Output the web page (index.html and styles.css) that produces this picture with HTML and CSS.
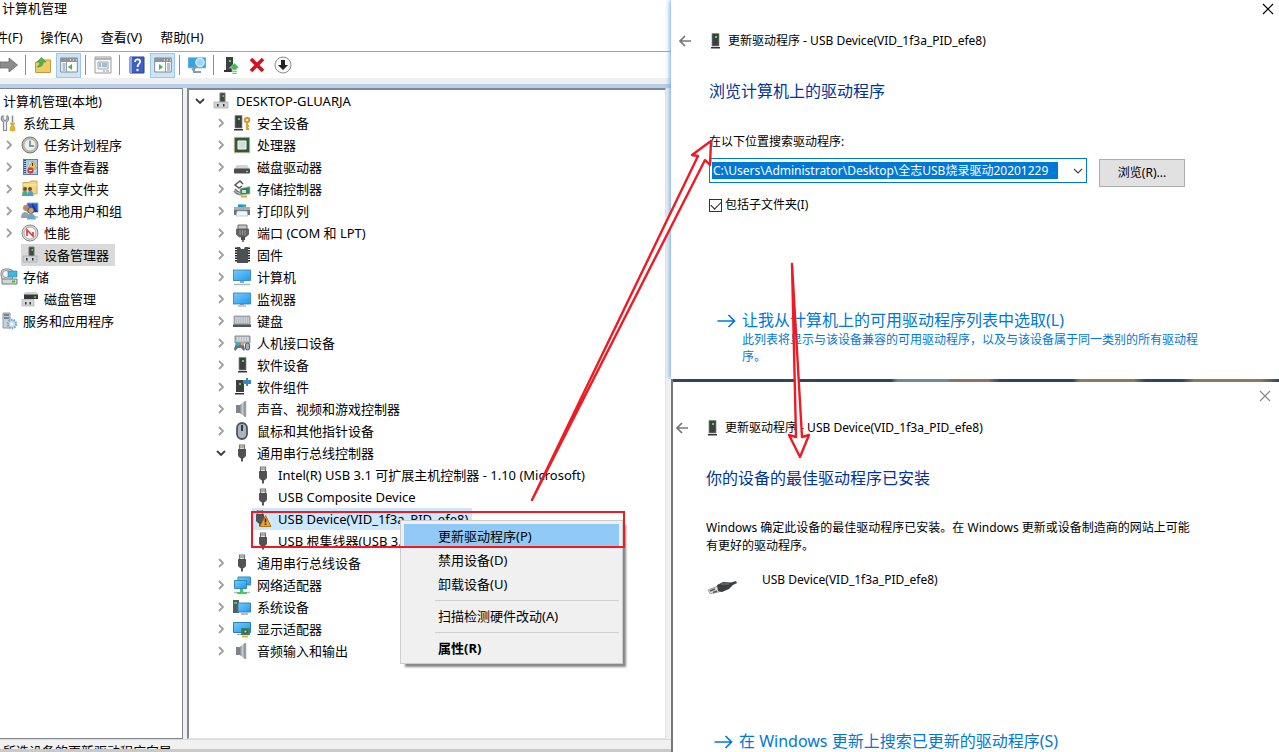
FILE: index.html
```html
<!DOCTYPE html>
<html lang="zh-CN">
<head>
<meta charset="utf-8">
<title>计算机管理</title>
<link rel="stylesheet" href="styles.css">
</head>
<body>
<svg class="sprite" aria-hidden="true">
  <defs>
    <linearGradient id="screen" x1="0" y1="0" x2="1" y2="1"><stop offset="0" stop-color="#7cc8fb"/><stop offset="1" stop-color="#1d9bf0"/></linearGradient>
    <linearGradient id="metal" x1="0" y1="0" x2="1" y2="0"><stop offset="0" stop-color="#68727a"/><stop offset=".6" stop-color="#c9cfd3"/><stop offset="1" stop-color="#7b858c"/></linearGradient>
  </defs>
  <symbol id="closed" viewBox="0 0 18 18"><path d="M7 5l4 4-4 4" fill="none" stroke="#a0a0a0" stroke-width="1.8"/></symbol>
  <symbol id="open" viewBox="0 0 18 18"><path d="M5 7l4 4 4-4" fill="none" stroke="#404040" stroke-width="1.9"/></symbol>
  <symbol id="tools" viewBox="0 0 18 18"><path d="M3 1.500v4l2 1.500 2-1.500v-4M3 1.500C0 3 1 7 3.500 8v8.500h3V8C9 7 9.500 3 7 1.500" fill="#f2f2f2" stroke="#858b90" stroke-width="1.200"/><path d="M12.500 1.500v7" stroke="#8a9298" stroke-width="1.600"/><path d="M10.500 9h4l-.8 2 1.300 4.500c0 2-5 2-5 0l1.300-4.500z" fill="#f1b21c" stroke="#c58a10" stroke-width=".6"/></symbol>
  <symbol id="clock" viewBox="0 0 18 18"><circle cx="9" cy="9" r="8" fill="#b9bdc0" stroke="#777" stroke-width="1"/><circle cx="9" cy="9" r="6" fill="#f4efd8" stroke="#8f99a1" stroke-width=".6"/><path d="M9 4.500V10h4" fill="none" stroke="#4784b5" stroke-width="1.500"/></symbol>
  <symbol id="events" viewBox="0 0 18 18"><rect x="2.500" y="1.500" width="14" height="15" fill="#a9c8e8" stroke="#597ea9"/><path d="M4 2v14" stroke="#35506f" stroke-width="2" stroke-dasharray="1 1"/><path d="M8 5h2M7 8h2M13 13h2" stroke="#e9f3fb"/><path d="M11.500 3l4 7h-8z" fill="#f7cf30" stroke="#bd920d" stroke-width=".6"/><path d="M11.500 5v3" stroke="#333"/><circle cx="9.500" cy="12.500" r="3" fill="#d8343a"/><path d="M8 12.500h3" stroke="#fff" stroke-width="1.200"/></symbol>
  <symbol id="share" viewBox="0 0 18 18"><path d="M2 4V2.500h6L9.500 1H16v13H2z" fill="#f1d580" stroke="#cfa94e"/><path d="M2 5h14" stroke="#fff0ac"/><circle cx="4" cy="9" r="2" fill="#6d5037"/><circle cx="9" cy="9" r="2" fill="#6d5037"/><path d="M1 16c0-7 6-7 6 0z" fill="#3bb48b"/><path d="M6.500 16c0-7 6-7 6 0z" fill="#4f9ed2"/></symbol>
  <symbol id="users" viewBox="0 0 18 18"><path d="M6 1h11v9H6z" fill="#2858d8" stroke="#9aa7b3"/><path d="M11 1v9h6z" fill="#163bac"/><path d="M9 14h8v2H9z" fill="#c3c8cc"/><circle cx="5" cy="6" r="3" fill="#b78b5e"/><circle cx="10" cy="8.500" r="3" fill="#cfaa78" stroke="#5d4330" stroke-width=".8"/><path d="M0 16c0-8 8-8 9 0z" fill="#8fa3b3"/><path d="M6 17.500c0-8 8-8 9 0z" fill="#6aa6cf"/></symbol>
  <symbol id="perf" viewBox="0 0 18 18"><circle cx="9" cy="9" r="8" fill="#ddd" stroke="#888"/><circle cx="9" cy="9" r="6" fill="#fff" stroke="#8a8a8a" stroke-width=".7"/><path d="M6 12V6l6 6V8" fill="none" stroke="#e23b3b" stroke-width="1.700"/></symbol>
  <symbol id="devmgr" viewBox="0 0 18 18"><path d="M8 1h5v9H8z" fill="#444" stroke="#747474"/><path d="M10.500 3H12v2h-1.500z" fill="#35df4d"/><path d="M2 10h14v6H2z" fill="#d2d4d6" stroke="#a5a8ab" stroke-width=".7"/><path d="M5 12h1.500v2.500H5zM11 12h1.500v2.500H11z" fill="#333"/></symbol>
  <symbol id="storage" viewBox="0 0 18 18"><rect x="1" y="1" width="12" height="11" rx="4" fill="#d7d9da" stroke="#858b8f"/><circle cx="6" cy="6" r="3.500" fill="#f6f6f6" stroke="#999"/><path d="M8 3h9v6H8z" fill="#45b4df" stroke="#3184a7" stroke-width=".6"/><path d="M2 11h15v5H2z" fill="#d3d5d6" stroke="#777b7e"/><path d="M12 13.500h3" stroke="#1fc43c" stroke-width="1.800"/></symbol>
  <symbol id="diskmgr" viewBox="0 0 18 18"><path d="M4 2h12l1 3H2z" fill="#d3d4d5"/><path d="M3 4.500h14V9H3z" fill="#353739"/><path d="M13 7h2" stroke="#45e151" stroke-width="1.500"/><path d="M1 9.500h12V16H1z" fill="#d6d8d9" stroke="#a0a3a6" stroke-width=".6"/><path d="M4 12h1.500v2.500H4zM8.500 12H10v2.500H8.500z" fill="#333"/></symbol>
  <symbol id="services" viewBox="0 0 18 18"><path d="M3 1h7v15H3z" fill="#c9d0d5" stroke="#8e989f"/><path d="M4 3h5M4 6h5" stroke="#536b7c" stroke-width="1.400"/><circle cx="12" cy="12" r="4.200" fill="#c3daea" stroke="#7ba3c1" stroke-width="2" stroke-dasharray="1.600 1"/><circle cx="12" cy="12" r="1.600" fill="#fff"/></symbol>
  <symbol id="tower" viewBox="0 0 18 18"><path d="M6 1.500h7V14H6z" fill="#3d3f40" stroke="#808486" stroke-width=".7"/><path d="M9 4h2v2H9z" fill="#35ed47"/><path d="M5 15h9v1.500H5z" fill="#333"/></symbol>
  <symbol id="security" viewBox="0 0 18 18"><path d="M2 1.500h7V14H2z" fill="#3d3f40" stroke="#808486" stroke-width=".7"/><path d="M5 4h2v2H5z" fill="#35ed47"/><path d="M1 15h9v1.500H1z" fill="#333"/><circle cx="14" cy="6" r="2.200" fill="#fff" stroke="#d59d2e" stroke-width="2.200"/><path d="M14 9v7M14 12h2M14 15h2" stroke="#d59d2e" stroke-width="1.800"/></symbol>
  <symbol id="cpu" viewBox="0 0 18 18"><rect x="1.500" y="1.500" width="15" height="15" fill="#3e6950" stroke="#b29d52" stroke-width="1.500" stroke-dasharray="1 1"/><rect x="3" y="3" width="12" height="12" fill="none" stroke="#295c43" stroke-width="2"/><path d="M5 5h8v8H5z" fill="#d9dbd6" stroke="#f3f3ef"/></symbol>
  <symbol id="drive" viewBox="0 0 18 18"><path d="M4 7h10l3 4H1z" fill="#d1d4d6"/><rect x="1" y="10.500" width="16" height="5" rx="1" fill="#4a4d4f"/><path d="M13 13.500h2" stroke="#4be35b" stroke-width="1.500"/></symbol>
  <symbol id="controller" viewBox="0 0 18 18"><path d="M10 4L7 1 2 5l4 3 3-2" fill="none" stroke="#555" stroke-width="1.500"/><path d="M2 9c2 3 4 3 6 4M1 11c2 3 4 3 7 4" stroke="#777" fill="none" stroke-width="1.500"/><path d="M7 8.500l10-2V14l-10 1z" fill="#34835e" stroke="#b9c8c0" stroke-width=".7"/><path d="M9 10h4v3H9z" fill="#d5dad7"/><path d="M8 16.500h6" stroke="#e8a322" stroke-width="2"/></symbol>
  <symbol id="printer" viewBox="0 0 18 18"><path d="M5 2h8v4H5z" fill="#d5e9f6"/><path d="M5 4h5" stroke="#1995d5" stroke-width="3"/><path d="M10 4h3" stroke="#3bb95c" stroke-width="3"/><path d="M1 6h16v7H1z" fill="#6a7176"/><path d="M1 5h16v3H1z" fill="#a7adb1"/><path d="M4 9h10l1 5H3z" fill="#f3f5f6" stroke="#a8aeb2" stroke-width=".6"/></symbol>
  <symbol id="port" viewBox="0 0 18 18"><path d="M5 1h9v5H5z" fill="#c2c4c5" stroke="#696b6c"/><path d="M3.500 5h12v5.500l-3 2.500h-6l-3-2.500z" fill="#626466" stroke="#454749" stroke-width=".7"/><path d="M7 6v5M9.500 6v5M12 6v5" stroke="#999"/><path d="M8 13h4v3H8z" fill="#4a4c4e"/><path d="M10 16v2" stroke="#4a4c4e" stroke-width="1.500"/></symbol>
  <symbol id="firmware" viewBox="0 0 18 18"><path d="M4 1h3l1 2h3l1-2h3v16H4z" fill="#4c5052"/><path d="M3 1.500v15M16 1.500v15" stroke="#222" stroke-width="2" stroke-dasharray="1.500 1"/></symbol>
  <symbol id="computer" viewBox="0 0 18 18"><rect x=".5" y="2" width="17" height="10.500" fill="url(#screen)" stroke="#2680b8" stroke-width=".8"/><path d="M7 13h4v2H7z" fill="#9ba6ae"/><path d="M1 16.500h16" stroke="#a3b8c8" stroke-width="1.500"/></symbol>
  <symbol id="monitor" viewBox="0 0 18 18"><rect x=".5" y="3" width="17" height="11" fill="url(#screen)" stroke="#2680b8" stroke-width=".8"/><path d="M7 14.500h4M5 16h8" stroke="#87939b"/></symbol>
  <symbol id="keyboard" viewBox="0 0 18 18"><path d="M1 4h16v10H1z" fill="#a9b0b4" stroke="#858d92" stroke-width=".7"/><path d="M2 6h14M2 8h14M2 10h14" stroke="#eee" stroke-dasharray="1.500 .6"/><path d="M0 12.500h18V15H0z" fill="#4d565c"/></symbol>
  <symbol id="hid" viewBox="0 0 18 18"><path d="M2 2h15v7H2z" fill="#b8bec1" stroke="#858d92"/><path d="M4 4h12M4 6h12" stroke="#f5f5f5" stroke-dasharray="1.500 1"/><path d="M1 15l2-6h7l2 6-1 2-3-3H5l-3 3z" fill="#62737f"/><circle cx="5" cy="10" r="2" fill="#3ba8dc"/><circle cx="9" cy="10" r="1.500" fill="#e4a04a"/><rect x="12.500" y="9" width="4" height="7" rx="2" fill="#a6afb4" stroke="#4f5a61"/></symbol>
  <symbol id="component" viewBox="0 0 18 18"><path d="M3 2h8v12H3z" fill="#3d3f40"/><path d="M6 5h2v2H6z" fill="#35ed47"/><path d="M2 15h9v1.500H2z" fill="#333"/><path d="M10 2h3V0h2v2h3v4h-3v2h-2V6h-3z" fill="#3787c5"/></symbol>
  <symbol id="speaker" viewBox="0 0 18 18"><path d="M3 5h3v8H3z" fill="#7b858b"/><path d="M6 5.500L12 1v16l-6-4.500z" fill="url(#metal)"/><path d="M12.500 1v16" stroke="#9aa2a8" stroke-width="1.500"/></symbol>
  <symbol id="mouse" viewBox="0 0 18 18"><rect x="4" y="1" width="10" height="16" rx="5" fill="#a9b4bd" stroke="#4c555d" stroke-width="1.800"/><path d="M9 3v6" stroke="#323b42" stroke-width="2"/></symbol>
  <symbol id="usb" viewBox="0 0 18 18"><path d="M6.500 1h5v5h-5z" fill="#e5e5e5" stroke="#777" stroke-width="1.200"/><path d="M8 2v2M10 2v2" stroke="#777"/><path d="M5.500 5.500h7V12l-2 2h-3l-2-2z" fill="#505254" stroke="#3c3d3f" stroke-width=".8"/><path d="M9 14v3.500" stroke="#555" stroke-width="2"/></symbol>
  <symbol id="usbwarn" viewBox="0 0 18 18"><use href="#usb" x="-3" y="-1" width="18" height="18"/><path d="M11.500 5.500l5.500 11H6z" fill="#f2a71d" stroke="#af7310"/><path d="M11.500 8.500v4M11.500 13.500v1.500" stroke="#222" stroke-width="1.600"/></symbol>
  <symbol id="network" viewBox="0 0 18 18"><path d="M5 1h12.500v8H5z" fill="url(#screen)" stroke="#3389bb"/><path d="M1.500 4.500h12v8h-12z" fill="url(#screen)" stroke="#3389bb"/><path d="M7 13h3v3h4v2H4v-2h3z" fill="#48c95e"/><path d="M1 16.500h3M14 16.500h3" stroke="#b5bcc0" stroke-width="1.500"/></symbol>
  <symbol id="system" viewBox="0 0 18 18"><path d="M0 2h6v13H0z" fill="#555d61"/><path d="M1 5h3" stroke="#57db6b" stroke-width="1.500"/><path d="M5 5h12.500v9H5z" fill="url(#screen)" stroke="#2e83b3"/><path d="M8 16h7" stroke="#9baab5" stroke-width="1.500"/></symbol>
  <symbol id="display" viewBox="0 0 18 18"><path d="M.5 2.500h17v10H.5z" fill="url(#screen)" stroke="#2680b8"/><path d="M4 14.500h4" stroke="#99a5ad"/><path d="M8 8h9v7H8z" fill="#36885a"/><path d="M11 10h3v3h-3z" fill="#c6d7cc" stroke="#444"/><path d="M9 16.500h6" stroke="#e6b33c" stroke-width="2"/></symbol>
  <symbol id="forward" viewBox="0 0 18 18"><path d="M0 6h9V2l8.500 7L9 16v-4H0z" fill="#8d8d8d" stroke="#686868" stroke-width=".8"/></symbol>
  <symbol id="folderup" viewBox="0 0 18 18"><path d="M1.500 6h5L9 4h7.500v12.500h-15z" fill="#f0cb6b" stroke="#c69b37"/><path d="M3 11c2-1 3-3 3-5H3l4.500-4.500L12 6H9c0 4-2 5-6 5z" fill="#4bb84a" stroke="#318e34" stroke-width=".6"/></symbol>
  <symbol id="treepane" viewBox="0 0 18 18"><path d="M.7 2h16.600v14H.7z" fill="#fff" stroke="#83898e"/><path d="M1 2h16v4H1z" fill="#8e9499"/><path d="M10 4h1M13 4h1M16 4h1" stroke="#fff"/><path d="M6.500 6v10" stroke="#999"/><path d="M2.500 8h3M2.500 10h3M2.500 12h3M2.500 14h3" stroke="#5389b6"/><path d="M12 8v6l-4-3z" fill="#43b649"/></symbol>
  <symbol id="actionpane" viewBox="0 0 18 18"><path d="M.7 2h16.600v14H.7z" fill="#fff" stroke="#83898e"/><path d="M1 2h16v4H1z" fill="#8e9499"/><path d="M10 4h1M13 4h1M16 4h1" stroke="#fff"/><path d="M11.500 6v10" stroke="#999"/><path d="M13 8h3M13 10h3M13 12h3M13 14h3" stroke="#5389b6"/><path d="M5 8v6l4-3z" fill="#43b649"/></symbol>
  <symbol id="props" viewBox="0 0 18 18"><path d="M1 1h16v16H1z" fill="#f8f8f8" stroke="#9b9b9b"/><path d="M1 3h16" stroke="#b4b4b4" stroke-width="2"/><path d="M4 6h10v7H4z" fill="#e1eaf0" stroke="#a4b0b8"/><path d="M5 8h2M8 8h5M5 10h2M8 10h5" stroke="#698bab"/><path d="M9 15h2M12 15h3" stroke="#999"/></symbol>
  <symbol id="help" viewBox="0 0 18 18"><path d="M2 1h14v16H2z" fill="#405fc2" stroke="#263e98"/><path d="M3 1v16" stroke="#94a5e5" stroke-width="2"/><path d="M7 6c0-4 6-3 5 0-.5 2-2.500 2-2.500 5" fill="none" stroke="#fff" stroke-width="1.800"/><circle cx="9.500" cy="14" r="1.200" fill="#fff"/></symbol>
  <symbol id="scan" viewBox="0 0 18 18"><path d="M0 1.500h18V12H0z" fill="#36a4df" stroke="#9cc3d6" stroke-width=".7"/><path d="M6 13v3h7" fill="none" stroke="#869ca9" stroke-width="2"/><circle cx="12" cy="6.500" r="4.200" fill="#9bd9fa" stroke="#dceaf0" stroke-width="1.300"/><path d="M9 10l-5 4" stroke="#8098a7" stroke-width="2"/></symbol>
  <symbol id="update" viewBox="0 0 18 18"><path d="M4 1h7v13H4z" fill="#3d3f40"/><path d="M7 4h2v2H7z" fill="#35ed47"/><path d="M2 14h9v2H2z" fill="#333"/><path d="M12.500 7l5 5H15v2h-5v-2H7.500zM10 14.500h5V16h-5zM10 16.500h5V18h-5z" fill="#3dbd4a" stroke="#fff" stroke-width=".5"/></symbol>
  <symbol id="remove" viewBox="0 0 18 18"><path d="M3 3l12 12M15 3L3 15" stroke="#d60f1e" stroke-width="3.600"/></symbol>
  <symbol id="down" viewBox="0 0 18 18"><circle cx="9" cy="9" r="8" fill="#f8f8f8" stroke="#8c8c8c"/><path d="M7 4h4v5h3l-5 5-5-5h3z" fill="#222"/></symbol>
  <symbol id="back" viewBox="0 0 18 18"><path d="M15 9H4M9 4L4 9l5 5" fill="none" stroke="#757575" stroke-width="1.700"/></symbol>
  <symbol id="go" viewBox="0 0 20 18"><path d="M1 9h17M12 3l6 6-6 6" fill="none" stroke="#0078d7" stroke-width="1.700"/></symbol>
  <symbol id="close" viewBox="0 0 18 18"><path d="M4 4l10 10M14 4L4 14" fill="none" stroke="currentColor" stroke-width="1.200"/></symbol>
</svg>

<div class="desktop">
  <section class="manager">
    <header class="titlebar">计算机管理</header>
    <nav class="menubar">
      <button>文件(F)</button><button>操作(A)</button><button>查看(V)</button><button>帮助(H)</button>
    </nav>
    <div class="toolbar">
      <button aria-label="前进"><svg><use href="#forward"/></svg></button><i></i>
      <button aria-label="向上"><svg><use href="#folderup"/></svg></button>
      <button class="on" aria-label="控制台树"><svg><use href="#treepane"/></svg></button><i></i>
      <button aria-label="属性"><svg><use href="#props"/></svg></button><i></i>
      <button aria-label="帮助"><svg><use href="#help"/></svg></button>
      <button class="on" aria-label="操作窗格"><svg><use href="#actionpane"/></svg></button><i></i>
      <button aria-label="扫描"><svg><use href="#scan"/></svg></button><i></i>
      <button aria-label="更新"><svg><use href="#update"/></svg></button>
      <button aria-label="卸载"><svg><use href="#remove"/></svg></button>
      <button aria-label="禁用"><svg><use href="#down"/></svg></button>
    </div>
    <div class="panes">
      <ul class="tree console">
        <li class="root"><span class="label">计算机管理(本地)</span></li>
        <li><span class="label"><svg><use href="#tools"/></svg>系统工具</span></li>
        <li><svg class="chev"><use href="#closed"/></svg><span class="label"><svg><use href="#clock"/></svg>任务计划程序</span></li>
        <li><svg class="chev"><use href="#closed"/></svg><span class="label"><svg><use href="#events"/></svg>事件查看器</span></li>
        <li><svg class="chev"><use href="#closed"/></svg><span class="label"><svg><use href="#share"/></svg>共享文件夹</span></li>
        <li><svg class="chev"><use href="#closed"/></svg><span class="label"><svg><use href="#users"/></svg>本地用户和组</span></li>
        <li><svg class="chev"><use href="#closed"/></svg><span class="label"><svg><use href="#perf"/></svg>性能</span></li>
        <li><span class="chev"></span><span class="label current"><svg><use href="#devmgr"/></svg>设备管理器</span></li>
        <li><span class="label"><svg><use href="#storage"/></svg>存储</span></li>
        <li><span class="chev"></span><span class="label"><svg><use href="#diskmgr"/></svg>磁盘管理</span></li>
        <li><span class="label"><svg><use href="#services"/></svg>服务和应用程序</span></li>
      </ul>
      <ul class="tree devices">
        <li class="root"><svg class="chev"><use href="#open"/></svg><span class="label"><svg><use href="#devmgr"/></svg>DESKTOP-GLUARJA</span></li>
        <li><svg class="chev"><use href="#closed"/></svg><span class="label"><svg><use href="#security"/></svg>安全设备</span></li>
        <li><svg class="chev"><use href="#closed"/></svg><span class="label"><svg><use href="#cpu"/></svg>处理器</span></li>
        <li><svg class="chev"><use href="#closed"/></svg><span class="label"><svg><use href="#drive"/></svg>磁盘驱动器</span></li>
        <li><svg class="chev"><use href="#closed"/></svg><span class="label"><svg><use href="#controller"/></svg>存储控制器</span></li>
        <li><svg class="chev"><use href="#closed"/></svg><span class="label"><svg><use href="#printer"/></svg>打印队列</span></li>
        <li><svg class="chev"><use href="#closed"/></svg><span class="label"><svg><use href="#port"/></svg>端口 (COM 和 LPT)</span></li>
        <li><svg class="chev"><use href="#closed"/></svg><span class="label"><svg><use href="#firmware"/></svg>固件</span></li>
        <li><svg class="chev"><use href="#closed"/></svg><span class="label"><svg><use href="#computer"/></svg>计算机</span></li>
        <li><svg class="chev"><use href="#closed"/></svg><span class="label"><svg><use href="#monitor"/></svg>监视器</span></li>
        <li><svg class="chev"><use href="#closed"/></svg><span class="label"><svg><use href="#keyboard"/></svg>键盘</span></li>
        <li><svg class="chev"><use href="#closed"/></svg><span class="label"><svg><use href="#hid"/></svg>人机接口设备</span></li>
        <li><svg class="chev"><use href="#closed"/></svg><span class="label"><svg><use href="#tower"/></svg>软件设备</span></li>
        <li><svg class="chev"><use href="#closed"/></svg><span class="label"><svg><use href="#component"/></svg>软件组件</span></li>
        <li><svg class="chev"><use href="#closed"/></svg><span class="label"><svg><use href="#speaker"/></svg>声音、视频和游戏控制器</span></li>
        <li><svg class="chev"><use href="#closed"/></svg><span class="label"><svg><use href="#mouse"/></svg>鼠标和其他指针设备</span></li>
        <li><svg class="chev"><use href="#open"/></svg><span class="label"><svg><use href="#usb"/></svg>通用串行总线控制器</span></li>
        <li class="leaf"><span class="label"><svg><use href="#usb"/></svg>Intel(R) USB 3.1 可扩展主机控制器 - 1.10 (Microsoft)</span></li>
        <li class="leaf"><span class="label"><svg><use href="#usb"/></svg>USB Composite Device</span></li>
        <li class="leaf target"><span class="label selected"><svg><use href="#usbwarn"/></svg>USB Device(VID_1f3a_PID_efe8)</span>
          <div class="popup">
            <button class="hot">更新驱动程序(P)</button>
            <button>禁用设备(D)</button>
            <button>卸载设备(U)</button>
            <hr>
            <button>扫描检测硬件改动(A)</button>
            <hr>
            <button class="strong">属性(R)</button>
          </div>
          <div class="marker"></div>
        </li>
        <li class="leaf"><span class="label"><svg><use href="#usb"/></svg>USB 根集线器(USB 3.0)</span></li>
        <li><svg class="chev"><use href="#closed"/></svg><span class="label"><svg><use href="#usb"/></svg>通用串行总线设备</span></li>
        <li><svg class="chev"><use href="#closed"/></svg><span class="label"><svg><use href="#network"/></svg>网络适配器</span></li>
        <li><svg class="chev"><use href="#closed"/></svg><span class="label"><svg><use href="#system"/></svg>系统设备</span></li>
        <li><svg class="chev"><use href="#closed"/></svg><span class="label"><svg><use href="#display"/></svg>显示适配器</span></li>
        <li><svg class="chev"><use href="#closed"/></svg><span class="label"><svg><use href="#speaker"/></svg>音频输入和输出</span></li>
      </ul>
    </div>
    <footer class="status"><span>所选设备的更新驱动程序向导</span></footer>
  </section>

  <div class="wizards">
    <section class="wizard browse">
      <div class="closebar"><button aria-label="关闭"><svg><use href="#close"/></svg></button></div>
      <header><button aria-label="返回"><svg><use href="#back"/></svg></button><svg><use href="#tower"/></svg><span>更新驱动程序 - USB Device(VID_1f3a_PID_efe8)</span></header>
      <div class="body">
        <h1>浏览计算机上的驱动程序</h1>
        <label class="caption" for="path">在以下位置搜索驱动程序:</label>
        <div class="picker">
          <div class="combo"><input id="path" type="text" value="C:\Users\Administrator\Desktop\全志USB烧录驱动20201229"><button aria-label="展开"><svg viewBox="0 0 12 12"><path d="M2 4l4 4 4-4" fill="none" stroke="#444" stroke-width="1.200"/></svg></button></div>
          <button class="push">浏览(R)...</button>
        </div>
        <div class="check"><input id="sub" type="checkbox" checked><label for="sub">包括子文件夹(I)</label></div>
        <a class="command" href="#"><svg><use href="#go"/></svg><span><b>让我从计算机上的可用驱动程序列表中选取(L)</b><small>此列表将显示与该设备兼容的可用驱动程序，以及与该设备属于同一类别的所有驱动程序。</small></span></a>
      </div>
    </section>
    <section class="wizard done">
      <div class="closebar"><button aria-label="关闭"><svg><use href="#close"/></svg></button></div>
      <header><button aria-label="返回"><svg><use href="#back"/></svg></button><svg><use href="#tower"/></svg><span>更新驱动程序 - USB Device(VID_1f3a_PID_efe8)</span></header>
      <div class="body">
        <h1>你的设备的最佳驱动程序已安装</h1>
        <p>Windows 确定此设备的最佳驱动程序已安装。在 Windows 更新或设备制造商的网站上可能有更好的驱动程序。</p>
        <div class="device">
          <svg viewBox="0 0 32 20"><path d="M2 13l10-4 4 5-8 2-4 .5z" fill="#e2e4e5" stroke="#888" stroke-width=".8"/><path d="M4 14l5-2M7 15.500l4-1.500" stroke="#555" stroke-width="1.400"/><path d="M11 8l6-3 8 .5 5-1.500 1 2-4 2-4 4-7 3-4-1z" fill="#3d3f41"/><path d="M15 7l8 0" stroke="#777" stroke-width="1.200"/></svg>
          <span>USB Device(VID_1f3a_PID_efe8)</span>
        </div>
        <a class="command" href="#"><svg><use href="#go"/></svg><span><b>在 Windows 更新上搜索已更新的驱动程序(S)</b></span></a>
      </div>
    </section>
  </div>

  <svg class="arrows" viewBox="0 0 1279 752" preserveAspectRatio="none" aria-hidden="true">
    <g fill="#fff" stroke="#ed1c24" stroke-width="2.400" stroke-linejoin="round">
      <path d="M532 500L698 156l-6-1 19-14-1 24-5-5z"/>
      <path d="M792 264l4 173-7-2 11 22 9-22-7 2z"/>
    </g>
  </svg>
</div>
</body>
</html>
```
FILE: styles.css
```css
* { box-sizing: border-box; }
body {
  margin: 0;
  background: #f0f0f0;
  color: #000;
  font: 13px/22px "Noto Sans", "Noto Sans CJK SC", sans-serif;
}
button {
  border: 0;
  padding: 0;
  background: none;
  color: inherit;
  font: inherit;
}
svg { flex: none; width: 18px; height: 18px; }
.sprite { position: absolute; width: 0; height: 0; }

.desktop {
  position: relative;
  display: grid;
  grid-template-columns: minmax(0, 671fr) minmax(0, 608fr);
  min-height: 100vh;
  overflow: hidden;
}

/* Computer management window */
.manager {
  display: flex;
  flex-direction: column;
  min-width: 0;
  background: #fff;
}
.titlebar { padding: 0 2px; height: 26px; line-height: 16px; }
.menubar {
  display: flex;
  align-items: flex-start;
  gap: 18px;
  height: 26px;
  margin-left: -18px;
  border-bottom: 1px solid #a5a8ab;
}
.toolbar {
  display: flex;
  align-items: center;
  gap: 1px;
  height: 32px;
  border-bottom: 6px solid #f0f0f0;
}
.toolbar button {
  display: grid;
  place-items: center;
  width: 25px;
  height: 25px;
}
.toolbar button:first-child { width: 21px; justify-content: start; }
.toolbar .on { background: #cce4f7; border: 1px solid #99c9ef; }
.toolbar i { width: 1px; height: 20px; margin: 0 3px; background: #8c8c8c; }
.panes {
  flex: 1;
  display: grid;
  grid-template-columns: minmax(0, 183fr) minmax(0, 479fr);
  gap: 4px;
  padding-right: 5px;
  background: #f0f0f0;
  border-top: 4px solid #b5cde8;
}
.tree { margin: 0; padding: 0 0 64px; list-style: none; background: #fff; }
.tree li { display: flex; align-items: center; height: 22px; white-space: nowrap; }
.label { display: flex; align-items: center; height: 22px; }
.console { border: 1px solid #828790; border-left: 0; padding-top: 1px; }
.console svg.chev, .console .chev { width: 18px; margin-right: 3px; }
.console .label { gap: 5px; padding-right: 6px; }
.console .root { padding-left: 3px; }
.console .current { background: #d9d9d9; }
.devices {
  border: 1px solid #e3e3e3;
  border-top: 2px solid #828790;
  border-left: 2px solid #828790;
}
.devices li { padding-left: 22px; }
.devices .root { padding-left: 1px; }
.devices .leaf { padding-left: 63px; }
.devices .chev { width: 20px; }
.devices .label { gap: 6px; padding: 0 4px 0 2px; }
.devices .selected { background: #cce8ff; }
.target { position: relative; }
.status {
  height: 13px;
  overflow: hidden;
  padding-left: 3px;
  background: #f0f0f0;
  border-top: 1px solid #dadada;
  border-bottom: 3px solid #c9c9c9;
}

/* Context menu and highlight frame over the device list */
.popup {
  position: absolute;
  z-index: 1;
  left: 211px;
  top: 12px;
  width: 223px;
  padding: 3px;
  background: #f0f0f0;
  border: 1px solid #ccc;
  box-shadow: 4px 4px 2px -1px #888;
}
.popup button {
  display: block;
  width: 100%;
  height: 24px;
  padding-left: 34px;
  text-align: left;
}
.popup .hot { background: #91c9f7; }
.popup .strong { font-weight: 700; }
.popup hr { margin: 4px 0 3px 31px; border: 0; border-top: 1px solid #cfcfcf; }
.marker {
  position: absolute;
  z-index: 2;
  left: 62px;
  top: 3px;
  width: 374px;
  height: 37px;
  border: 2px solid #ed1c24;
}

/* Driver wizards */
.wizards {
  display: grid;
  grid-template-rows: 379fr 373fr;
  min-width: 0;
}
.wizard {
  display: flex;
  flex-direction: column;
  background: #fff;
  font-size: 12px;
  line-height: 18px;
}
.browse { box-shadow: -1px 0 5px #64a4ee; clip-path: inset(0 0 0 -6px); }
.done {
  border-left: 2px solid #777;
  padding-top: 3px;
  background:
    linear-gradient(90deg, #304562 36%, #6f8a96 37% 45%, #8a7461 46% 52%, #304562 54% 66%, #8c7a5c 67% 76%, #304562 78% 84%, #8c7a5c 86% 97%, #304562) 0 0 / 100% 3px no-repeat,
    #fff;
}
.closebar { display: flex; justify-content: flex-end; padding-right: 2px; }
.closebar button { height: 18px; }
.done .closebar { padding: 5px 5px 0 0; color: #888; }
.wizard header { display: flex; align-items: center; height: 18px; margin-top: 14px; padding-left: 5px; }
.done header { padding-left: 0; }
.wizard header button { height: 18px; margin-right: 12px; }
.wizard header span { padding-left: 4px; }
.body { display: flex; flex-direction: column; flex: 1; padding: 0 80px 0 38px; }
.done .body { padding: 0 80px 0 33px; }
h1 { margin: 29px 0 0; color: #003399; font-size: 16px; font-weight: 400; line-height: 24px; }
.caption { margin-top: 30px; }
.picker { display: flex; gap: 12px; align-items: flex-end; margin-top: 7px; }
.combo {
  display: flex;
  flex: 0 1 378px;
  align-items: center;
  justify-content: space-between;
  height: 25px;
  margin-bottom: 4px;
  padding: 0 2px;
  border: 1px solid #0078d7;
}
.combo input {
  flex: 0 1 346px;
  min-width: 0;
  height: 17px;
  padding: 0 0 0 1px;
  border: 0;
  background: #0078d7;
  color: #fff;
  font: inherit;
}
.combo button { display: grid; height: 12px; }
.combo svg { width: 12px; height: 12px; }
.push { width: 86px; height: 28px; background: #e1e1e1; border: 1px solid #adadad; }
.check { display: flex; align-items: center; gap: 3px; margin-top: 9px; }
.check input {
  appearance: none;
  display: grid;
  place-items: center;
  width: 13px;
  height: 13px;
  margin: 0;
  border: 1px solid #333;
}
.check input:checked::before {
  content: "";
  width: 9px;
  height: 5px;
  margin-bottom: 3px;
  border: solid #222;
  border-width: 0 0 1px 1px;
  rotate: -45deg;
}
.command { display: flex; gap: 5px; padding-left: 7px; margin-top: auto; color: #0078d7; text-decoration: none; }
.command svg { width: 21px; height: 18px; margin-top: 3px; }
.command b { display: block; font-size: 16px; font-weight: 400; line-height: 22px; }
.command small { display: block; font-size: 12px; line-height: 17px; }
.browse .command { padding-bottom: 14px; }
.done p { margin: 29px 0 0; line-height: 18px; }
.device { display: flex; gap: 24px; margin-top: 16px; }
.device svg { width: 32px; height: 20px; margin-top: 6px; }

.arrows { position: absolute; z-index: 3; inset: 0; width: 100%; height: 100%; pointer-events: none; }
```
